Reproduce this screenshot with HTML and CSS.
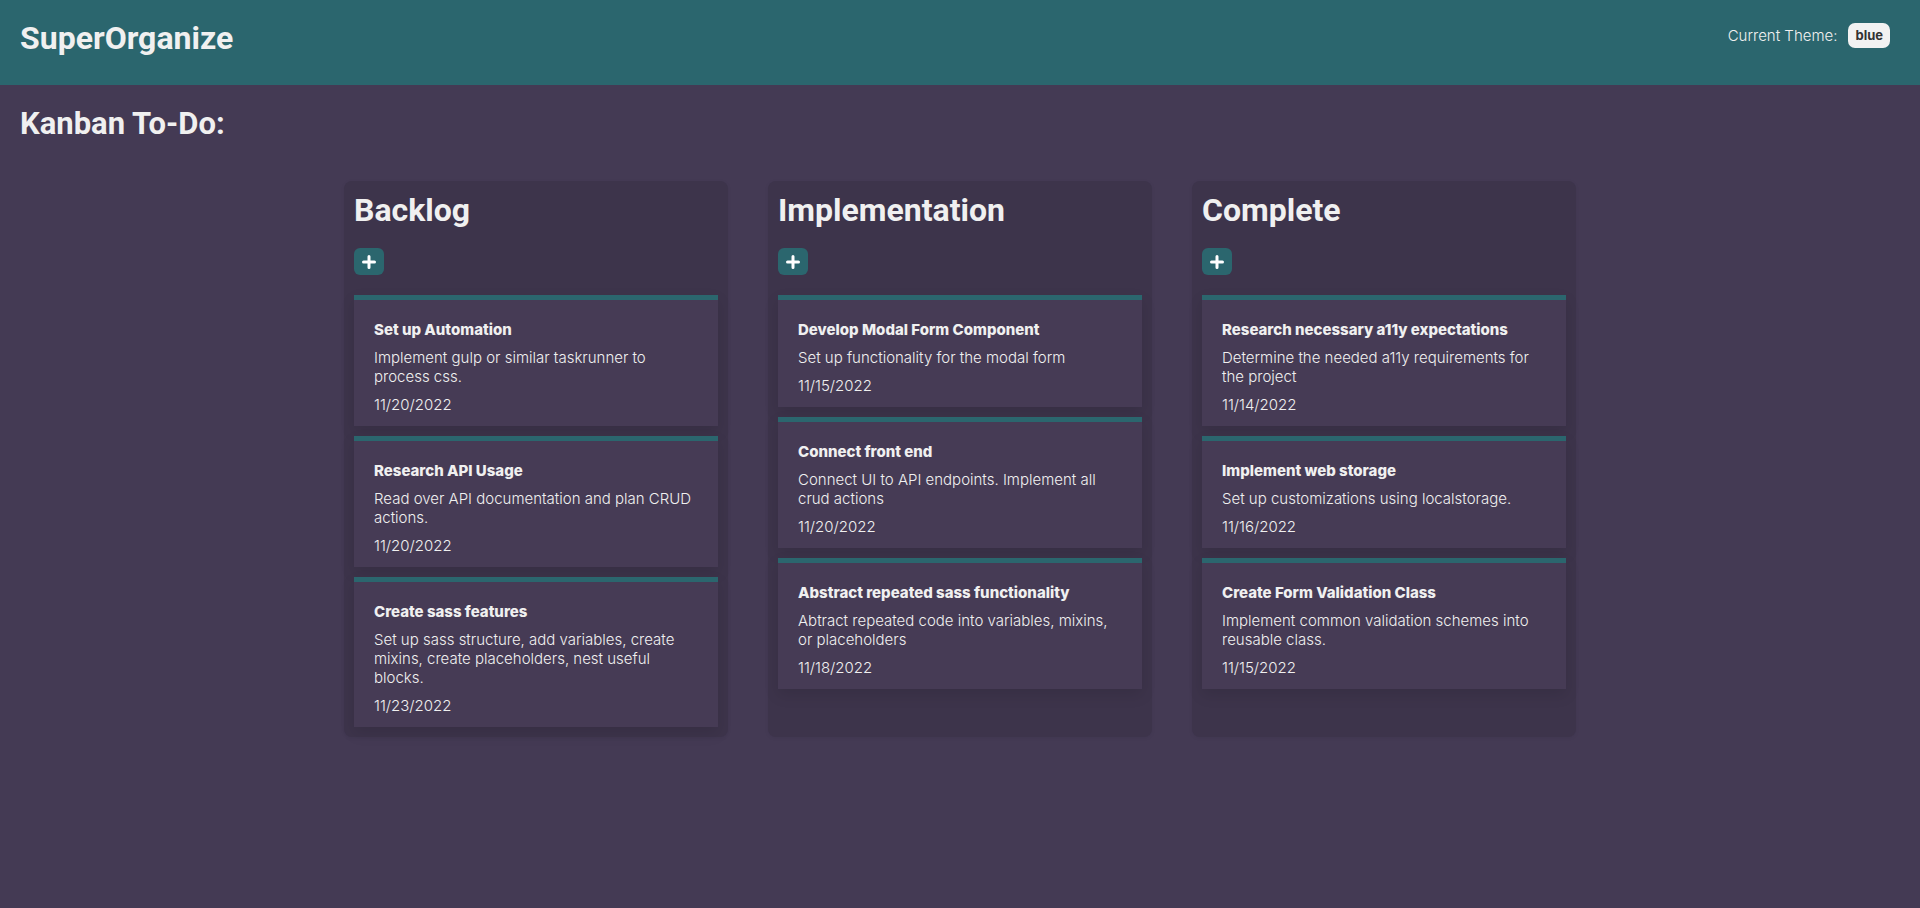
FILE: index.html
```html
<!DOCTYPE html>
<html lang="en">
<head>
<meta charset="utf-8">
<title>SuperOrganize</title>
<link rel="stylesheet" href="styles.css">
</head>
<body>
<header class="topbar">
  <h1 class="brand">SuperOrganize</h1>
  <div class="theme">
    <span class="theme-label">Current Theme:</span>
    <span class="badge">blue</span>
  </div>
</header>
<main class="page">
  <h2 class="page-title">Kanban To-Do:</h2>
  <div class="board">
    <section class="column">
      <h2 class="column-title">Backlog</h2>
      <button class="add-btn" aria-label="Add"><svg width="14" height="14" viewBox="0 0 14 14"><path d="M7 1.5v11M1.5 7h11" stroke="#fff" stroke-width="3" stroke-linecap="round"/></svg></button>
      <div class="cards">
        <article class="card">
          <h3 class="card-title">Set up Automation</h3>
          <p class="card-desc">Implement gulp or similar taskrunner to process css.</p>
          <p class="card-date">11/20/2022</p>
        </article>
        <article class="card">
          <h3 class="card-title">Research API Usage</h3>
          <p class="card-desc">Read over API documentation and plan CRUD actions.</p>
          <p class="card-date">11/20/2022</p>
        </article>
        <article class="card">
          <h3 class="card-title">Create sass features</h3>
          <p class="card-desc">Set up sass structure, add variables, create mixins, create placeholders, nest useful blocks.</p>
          <p class="card-date">11/23/2022</p>
        </article>
      </div>
    </section>
    <section class="column">
      <h2 class="column-title">Implementation</h2>
      <button class="add-btn" aria-label="Add"><svg width="14" height="14" viewBox="0 0 14 14"><path d="M7 1.5v11M1.5 7h11" stroke="#fff" stroke-width="3" stroke-linecap="round"/></svg></button>
      <div class="cards">
        <article class="card">
          <h3 class="card-title">Develop Modal Form Component</h3>
          <p class="card-desc">Set up functionality for the modal form</p>
          <p class="card-date">11/15/2022</p>
        </article>
        <article class="card">
          <h3 class="card-title">Connect front end</h3>
          <p class="card-desc">Connect UI to API endpoints. Implement all crud actions</p>
          <p class="card-date">11/20/2022</p>
        </article>
        <article class="card">
          <h3 class="card-title">Abstract repeated sass functionality</h3>
          <p class="card-desc">Abtract repeated code into variables, mixins, or placeholders</p>
          <p class="card-date">11/18/2022</p>
        </article>
      </div>
    </section>
    <section class="column">
      <h2 class="column-title">Complete</h2>
      <button class="add-btn" aria-label="Add"><svg width="14" height="14" viewBox="0 0 14 14"><path d="M7 1.5v11M1.5 7h11" stroke="#fff" stroke-width="3" stroke-linecap="round"/></svg></button>
      <div class="cards">
        <article class="card">
          <h3 class="card-title">Research necessary a11y expectations</h3>
          <p class="card-desc">Determine the needed a11y requirements for the project</p>
          <p class="card-date">11/14/2022</p>
        </article>
        <article class="card">
          <h3 class="card-title">Implement web storage</h3>
          <p class="card-desc">Set up customizations using localstorage.</p>
          <p class="card-date">11/16/2022</p>
        </article>
        <article class="card">
          <h3 class="card-title">Create Form Validation Class</h3>
          <p class="card-desc">Implement common validation schemes into reusable class.</p>
          <p class="card-date">11/15/2022</p>
        </article>
      </div>
    </section>
  </div>
</main>
</body>
</html>
```
FILE: styles.css
```css
* { box-sizing: border-box; }
html, body {
  margin: 0;
  padding: 0;
}
body {
  background: #443a54;
  color: #f0f0f0;
  font-family: "Inter", "Noto Sans", sans-serif;
  min-height: 908px;
}
.topbar {
  height: 85px;
  background: #2b666e;
  display: flex;
  align-items: center;
  justify-content: space-between;
  padding: 0 30px 0 20px;
}
.brand {
  margin: 0 0 10px 0;
  font-family: "Roboto", sans-serif;
  font-weight: 700;
  font-size: 32px;
  color: #f0f0f0;
}
.theme {
  display: flex;
  align-items: center;
  gap: 11px;
  margin-bottom: 14px;
}
.theme-label {
  font-size: 15px;
  font-weight: 300;
  color: #f0f0f0;
}
.badge {
  background: #f2f2f2;
  color: #333;
  font-weight: 700;
  font-size: 13px;
  border-radius: 7px;
  padding: 4px 7px;
  line-height: 17px;
}
.page {
  padding: 0 20px;
}
.page-title {
  margin: 0;
  padding-top: 22px;
  font-family: "Roboto", sans-serif;
  font-weight: 700;
  font-size: 31px;
  line-height: 34px;
}
.board {
  display: flex;
  justify-content: center;
  align-items: stretch;
  gap: 40px;
  margin-top: 40px;
}
.column {
  width: 384px;
  background: #3d344b;
  border-radius: 8px;
  padding: 10px;
  box-shadow: 0 1px 4px rgba(0,0,0,0.06);
}
.column-title {
  margin: 0;
  font-family: "Roboto", sans-serif;
  font-weight: 700;
  font-size: 32px;
  line-height: 38px;
}
.add-btn {
  display: flex;
  align-items: center;
  justify-content: center;
  width: 30px;
  height: 27px;
  margin-top: 19px;
  padding: 0;
  border: none;
  border-radius: 6px;
  background: #2b666e;
}
.cards {
  display: flex;
  flex-direction: column;
  gap: 10px;
  margin-top: 20px;
}
.card {
  background: #463b55;
  border-top: 5px solid #2b666e;
  padding: 20px 20px 12px;
  box-shadow: 0 6px 14px rgba(0,0,0,0.1);
}
.card-title {
  margin: 0 0 8px;
  font-size: 15px;
  font-weight: 800;
  line-height: 20px;
}
.card-desc {
  margin: 0 0 9px;
  font-size: 15px;
  font-weight: 300;
  line-height: 19px;
}
.card-date {
  margin: 0;
  font-size: 15px;
  font-weight: 300;
  line-height: 19px;
}
```
